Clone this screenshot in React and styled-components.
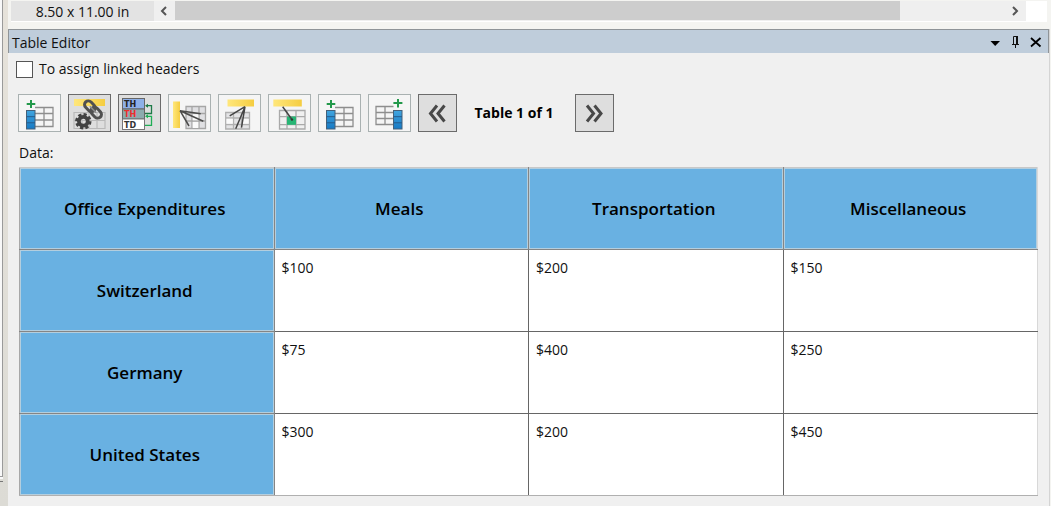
import React from "react";
import styled, { createGlobalStyle, css } from "styled-components";

const GlobalStyle = createGlobalStyle`
  * { box-sizing: border-box; }
  body {
    margin: 0;
    background: #f4f4f1;
    color: #111;
    font-family: "Open Sans", "Noto Sans", sans-serif;
    font-size: 14px;
    line-height: 20px;
  }
`;

const Shell = styled.div`
  display: grid;
  grid-template-columns: 8px minmax(0, 1fr);
  min-height: 100vh;
`;

const Rail = styled.div`
  display: flex;
  flex-direction: column;
  background: linear-gradient(#e6e2da, #dcdbd5);
`;

const RailEdge = styled.div`
  flex: 1;
  width: 3px;
  background: #f8f8f8;
  border-right: 1px solid #9a9a9a;
  border-bottom: 1px solid #9a9a9a;
`;

const RailFoot = styled.div`
  width: 3px;
  height: 29px;
  border-top: 2px solid #f8f8f8;
  &::before {
    content: "";
    display: block;
    height: 2px;
    border-bottom: 1px solid #777;
  }
`;

const Main = styled.main`
  display: flex;
  flex-direction: column;
`;

const StatusBar = styled.div`
  display: flex;
  height: 22px;
  margin: 0 4px 7px 3px;
  background: #fff;
  border-top: 1px solid #f4f4f1;
  border-bottom: 1px solid #fff;
`;

const PageSize = styled.div`
  width: 143px;
  background: #e3e3e3;
  text-align: center;
  line-height: 22px;
`;

const ScrollBar = styled.div`
  display: flex;
  flex: 1;
  margin-right: 21px;
  background: #efefef;
`;

const ScrollButton = styled.button`
  display: flex;
  align-items: center;
  justify-content: center;
  width: 21px;
  padding: 0;
  border: 0;
  background: #efefef;
`;

const Track = styled.div`
  flex: 1;
`;

const Thumb = styled.div`
  width: 87.3%;
  height: 19px;
  background: #cdcdcd;
`;

const Panel = styled.section`
  flex: 1;
  margin-right: 1px;
  background: #f0f0f0;
  border-right: 1px solid #d4d4d4;
`;

const TitleBar = styled.header`
  display: flex;
  align-items: center;
  justify-content: space-between;
  height: 24px;
  padding: 2px 3px 0 3px;
  background: #bfcddb;
  border: 1px solid #8f9498;
  border-bottom: 0;
`;

const Title = styled.h1`
  margin: 0;
  font-size: 14px;
  font-weight: 400;
`;

const WindowButtons = styled.div`
  display: flex;
`;

const WindowButton = styled.button`
  display: flex;
  width: 20px;
  height: 20px;
  padding: 0;
  border: 0;
  background: none;
`;

const Option = styled.label`
  display: flex;
  align-items: center;
  gap: 6px;
  width: max-content;
  margin: 6px 0 0 8px;
`;

const CheckBox = styled.input`
  appearance: none;
  width: 17px;
  height: 17px;
  margin: 0;
  border: 1px solid #555;
  background: #fff;
`;

const Toolbar = styled.div`
  display: flex;
  align-items: center;
  gap: 7px;
  padding: 15px 0 11px 10px;
`;

const ToolButton = styled.button`
  width: ${(p) => (p.$narrow ? 39 : 43)}px;
  height: 38px;
  padding: 0;
  border: 1px solid #a9b1b1;
  background: #f5f5f5;
  ${(p) =>
    p.$pressed &&
    css`
      border-color: #6b6b6b;
      background: #dedede;
    `}
  svg { display: block; }
`;

const Counter = styled.strong`
  width: 104px;
  padding-right: 4px;
  text-align: center;
  font-size: 14px;
  color: #000;
`;

const Grid = styled.table`
  width: calc(100% - 22px);
  margin: 0 0 10px 11px;
  table-layout: fixed;
  border-collapse: collapse;

  tr > :first-child { border-left-color: #a8a8a8; }
  tr > :last-child { border-right-color: #d8d8d8; }
  thead th { border-top-color: #c8c8c8; }
  tbody tr:last-child > * { border-bottom-color: #b0b0b0; }
`;

const Caption = styled.caption`
  height: 24px;
  text-align: left;
`;

const HeadCell = styled.th`
  height: 82px;
  padding: 0 4px 0 0;
  border: 1px solid #858585;
  background: #69b1e2;
  box-shadow: inset 0 0 0 1px #b4cede;
  color: #000;
  font-size: 17px;
  line-height: 24px;
  font-weight: 600;
`;

const Cell = styled.td`
  height: 82px;
  padding: 8px 7px;
  border: 1px solid #666;
  background: #fff;
  vertical-align: top;
`;

const Glyph = ({ width = 43, children }) => (
  <svg width={width - 2} height="36" viewBox={`1 1 ${width - 2} 36`} fill="none" aria-hidden="true">
    <defs>
      <linearGradient id="gold" x1="0" x2="1">
        <stop offset="0" stopColor="#ffe77c" />
        <stop offset="1" stopColor="#f5cd41" />
      </linearGradient>
      <linearGradient id="azure" x1="0" x2="0" y1="0" y2="1">
        <stop offset="0" stopColor="#42a5df" />
        <stop offset="1" stopColor="#1679c4" />
      </linearGradient>
    </defs>
    {children}
  </svg>
);

const AddLeftIcon = () => (
  <Glyph>
    <path d="M17 13.5H35V32.5H17M17 19.5H35M17 26H35M26 13.5V32.5" stroke="#8e8e8e" strokeWidth="1.3" />
    <rect x="8.5" y="16.5" width="8.5" height="18.5" fill="url(#azure)" stroke="#45617a" />
    <path d="M8.5 22.7H17M8.5 28.8H17" stroke="#255b8b" />
    <path d="M13 6V14M8.7 10H17.3" stroke="#23994b" strokeWidth="2" />
  </Glyph>
);

const AddRightIcon = () => (
  <Glyph>
    <path d="M25.5 12.5H8V30.5H25.5M8 18.5H25.5M8 24.5H25.5M17 12.5V30.5" stroke="#8e8e8e" strokeWidth="1.3" />
    <rect x="25.5" y="16.5" width="8.5" height="18.5" fill="url(#azure)" stroke="#45617a" />
    <path d="M25.5 22.7H34M25.5 28.8H34" stroke="#255b8b" />
    <path d="M30 5V13.6M25.4 9H34.4" stroke="#23994b" strokeWidth="2" />
  </Glyph>
);

const LinkSettingsIcon = () => (
  <Glyph>
    <rect x="6" y="5" width="31" height="7" fill="url(#gold)" />
    <path d="M6 18.5H37V34.5H6ZM6 26.5H37M14 18.5V34.5M21 18.5V34.5M29 18.5V34.5" fill="none" stroke="#b9b9b9" strokeWidth="1.2" />
    <g transform="rotate(46 25 15.5)" stroke="#505050" strokeWidth="3">
      <rect x="14.5" y="11.7" width="12" height="7.6" rx="3.8" />
      <rect x="23.5" y="11.7" width="12" height="7.6" rx="3.8" />
      <path d="M20.5 15.5H29.5" stroke="#8b8b8b" strokeWidth="1.6" />
    </g>
    <circle cx="15.3" cy="27.3" r="4.4" stroke="#414141" strokeWidth="3.8" />
    <circle cx="15.3" cy="27.3" r="6.8" stroke="#414141" strokeWidth="2.8" strokeDasharray="3.2 2.14" />
  </Glyph>
);

const HeaderTagsIcon = () => (
  <Glyph>
    <rect x="4.5" y="4.5" width="22" height="10.5" fill="#8eb0e8" stroke="#666" />
    <rect x="4.5" y="15" width="22" height="10" fill="#8dabae" stroke="#666" />
    <rect x="4.5" y="25" width="22" height="10.5" fill="#fff" stroke="#777" />
    <g fontFamily="DejaVu Sans, sans-serif" fontSize="8" fontWeight="700">
      <text x="6" y="12.5" fill="#222">TH</text>
      <text x="6" y="23" fill="#ed2d2d">TH</text>
      <text x="6" y="33.5" fill="#333">TD</text>
    </g>
    <path d="M28 11.7H33.5V19.5H27" stroke="#1d7a47" strokeWidth="1.3" />
    <path d="M28 22.3H33.5V31.3H27" stroke="#1fae55" strokeWidth="1.3" />
    <path d="M27 11.7L30 9.7V13.7Z" fill="#1d7a47" />
    <path d="M27 22.3L30 20.3V24.3Z" fill="#1fae55" />
  </Glyph>
);

const RowHeaderIcon = () => (
  <Glyph>
    <path d="M18 12.5H37.5V34.5H18ZM18 19.5H37.5M18 27H37.5M24 12.5V34.5M31 12.5V34.5" fill="#e0e0e3" stroke="#a6a6a6" strokeWidth="1.3" />
    <path d="M24.7 20.2H30.3V26.3H24.7ZM24.7 28H30.3V34H24.7Z" fill="#fafafa" />
    <rect x="5" y="7.5" width="7" height="26.5" fill="url(#gold)" />
    <path d="M12 16.7L32.7 19.8M12 16.7L35.3 27.2M12 16.7L21 32" stroke="#4b4b4b" strokeWidth="1.5" />
  </Glyph>
);

const ColumnHeaderIcon = () => (
  <Glyph>
    <path d="M7.7 18.5H31.5V35H7.7ZM7.7 24H31.5M7.7 30.5H31.5M15.5 18.5V35M23.5 18.5V35" fill="#e4e4e6" stroke="#b0b0b0" strokeWidth="1.3" />
    <path d="M8.5 24.7H14.8V29.8H8.5ZM24.2 24.7H30.7V29.8H24.2Z" fill="#fafafa" />
    <rect x="9.5" y="5.5" width="26.5" height="7" fill="url(#gold)" />
    <path d="M27 12.7L11.7 21.8M27 12.7L17.7 34.7M27 12.7L23.5 33.5" stroke="#444" strokeWidth="1.5" />
  </Glyph>
);

const CellHeaderIcon = () => (
  <Glyph>
    <path d="M11.5 16.5H37V35H11.5ZM11.5 22.7H37M11.5 30.7H37M19 16.5V35M28 16.5V35" fill="#f0f0f0" stroke="#aaa" strokeWidth="1.3" />
    <rect x="19" y="22.5" width="9" height="8.3" fill="#27b574" />
    <rect x="5.3" y="5.5" width="28.5" height="7" fill="url(#gold)" />
    <path d="M14.7 12.7L24.3 26" stroke="#444" strokeWidth="1.5" />
    <circle cx="24" cy="25.6" r="1.2" fill="#333" />
  </Glyph>
);

const BackIcon = () => (
  <Glyph width={39}>
    <path d="M19 11.5L12.5 19.5L19 27.5M26.5 11.5L20 19.5L26.5 27.5" stroke="#484848" strokeWidth="3" />
  </Glyph>
);

const ForwardIcon = () => (
  <Glyph width={39}>
    <path d="M12 11.5L18.5 19.5L12 27.5M19.5 11.5L26 19.5L19.5 27.5" stroke="#484848" strokeWidth="3" />
  </Glyph>
);

const Chevron = ({ d }) => (
  <svg width="9" height="10" viewBox="0 0 9 10" fill="none" aria-hidden="true">
    <path d={d} stroke="#555" strokeWidth="2" />
  </svg>
);

const tools = [
  { name: "Add column left", Icon: AddLeftIcon },
  { name: "Link settings", Icon: LinkSettingsIcon, pressed: true },
  { name: "Show header tags", Icon: HeaderTagsIcon, pressed: true },
  { name: "Link row header", Icon: RowHeaderIcon },
  { name: "Link column header", Icon: ColumnHeaderIcon },
  { name: "Link cell header", Icon: CellHeaderIcon },
  { name: "Insert header before", Icon: AddLeftIcon },
  { name: "Insert header after", Icon: AddRightIcon },
];

const columns = ["Office Expenditures", "Meals", "Transportation", "Miscellaneous"];
const rows = [
  ["Switzerland", "$100", "$200", "$150"],
  ["Germany", "$75", "$400", "$250"],
  ["United States", "$300", "$200", "$450"],
];

export default function App() {
  return (
    <>
      <GlobalStyle />
      <Shell>
        <Rail>
          <RailEdge />
          <RailFoot />
        </Rail>
        <Main>
          <StatusBar>
            <PageSize>8.50 x 11.00 in</PageSize>
            <ScrollBar>
              <ScrollButton aria-label="Scroll left">
                <Chevron d="M6 1L2 5L6 9" />
              </ScrollButton>
              <Track>
                <Thumb />
              </Track>
              <ScrollButton aria-label="Scroll right">
                <Chevron d="M2 1L6 5L2 9" />
              </ScrollButton>
            </ScrollBar>
          </StatusBar>
          <Panel>
            <TitleBar>
              <Title>Table Editor</Title>
              <WindowButtons>
                <WindowButton aria-label="Menu">
                  <svg width="20" height="20" viewBox="0 0 20 20" aria-hidden="true">
                    <path d="M5.5 8H15L10.2 13Z" fill="#000" />
                  </svg>
                </WindowButton>
                <WindowButton aria-label="Pin">
                  <svg width="20" height="20" viewBox="0 0 20 20" fill="none" aria-hidden="true">
                    <path d="M8.5 11V3.5H12.5V11M7 11.5H14M10.5 12V15" stroke="#111" />
                    <path d="M12 3V11" stroke="#111" strokeWidth="2" />
                  </svg>
                </WindowButton>
                <WindowButton aria-label="Close">
                  <svg width="20" height="20" viewBox="0 0 20 20" fill="none" aria-hidden="true">
                    <path d="M6 5L15.5 13.5M15.5 5L6 13.5" stroke="#000" strokeWidth="1.8" />
                  </svg>
                </WindowButton>
              </WindowButtons>
            </TitleBar>
            <Option>
              <CheckBox type="checkbox" />
              To assign linked headers
            </Option>
            <Toolbar>
              {tools.map(({ name, Icon, pressed }) => (
                <ToolButton key={name} aria-label={name} $pressed={pressed}>
                  <Icon />
                </ToolButton>
              ))}
              <ToolButton aria-label="Previous table" $pressed $narrow>
                <BackIcon />
              </ToolButton>
              <Counter>Table 1 of 1</Counter>
              <ToolButton aria-label="Next table" $pressed $narrow>
                <ForwardIcon />
              </ToolButton>
            </Toolbar>
            <Grid>
              <Caption>Data:</Caption>
              <thead>
                <tr>
                  {columns.map((c) => (
                    <HeadCell key={c} scope="col">{c}</HeadCell>
                  ))}
                </tr>
              </thead>
              <tbody>
                {rows.map(([head, ...values]) => (
                  <tr key={head}>
                    <HeadCell scope="row">{head}</HeadCell>
                    {values.map((v, i) => (
                      <Cell key={i}>{v}</Cell>
                    ))}
                  </tr>
                ))}
              </tbody>
            </Grid>
          </Panel>
        </Main>
      </Shell>
    </>
  );
}
